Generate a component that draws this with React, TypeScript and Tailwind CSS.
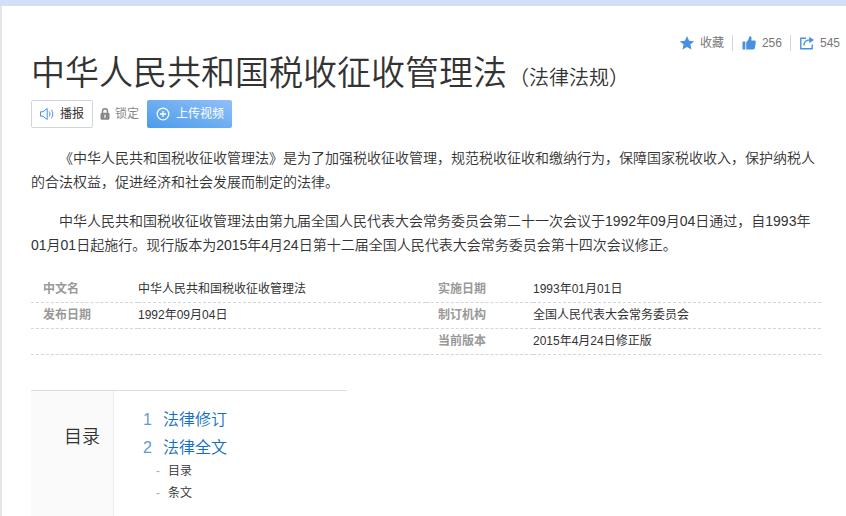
import type { ReactNode } from 'react';

const infoRows = [
  [
    { name: '中文名', value: '中华人民共和国税收征收管理法' },
    { name: '实施日期', value: '1993年01月01日' },
  ],
  [
    { name: '发布日期', value: '1992年09月04日' },
    { name: '制订机构', value: '全国人民代表大会常务委员会' },
  ],
  [null, { name: '当前版本', value: '2015年4月24日修正版' }],
];

const catalog = [
  { id: '1', label: '法律修订', children: [] },
  { id: '2', label: '法律全文', children: ['目录', '条文'] },
];

function StarIcon() {
  return (
    <svg className="w-4 h-4 text-[#4a90e2]" viewBox="0 0 16 16" fill="currentColor" aria-hidden="true">
      <path d="M8 1l2.1 4.700 5.100.5-3.800 3.400 1.100 5L8 12l-4.500 2.600 1.100-5L.8 6.200l5.100-.5z" />
    </svg>
  );
}

function ThumbIcon() {
  return (
    <svg className="w-4 h-4 text-[#4a90e2]" viewBox="0 0 16 16" fill="currentColor" aria-hidden="true">
      <path d="M1.500 6.500h2.800v8H1.500z" />
      <path d="M5.200 7c1.600-.9 2.600-2.500 2.800-4.700C8.100 1.300 8.800 1 9.500 1.300c1.200.5 1.300 2.300.8 4.200h3.200c.9 0 1.400.6 1.300 1.400l-.9 6.200c-.1.9-.7 1.400-1.500 1.400H5.200z" />
    </svg>
  );
}

function ShareIcon() {
  return (
    <svg className="w-4 h-4 text-[#4a90e2]" viewBox="0 0 16 16" fill="none" stroke="currentColor" strokeWidth="1.400" aria-hidden="true">
      <path d="M7 3.300H1.800v10.400h11.400V9.500" />
      <path d="M4.800 10.500c.2-3.500 2.200-5.400 6-5.600" />
      <path d="M10.200 1.800L15 4.900l-4.800 3.300z" fill="currentColor" stroke="none" />
    </svg>
  );
}

function SpeakerIcon() {
  return (
    <svg className="w-4 h-4 text-[#4a90e2]" viewBox="0 0 16 16" fill="none" stroke="currentColor" aria-hidden="true">
      <path d="M1.500 5.800H4L8.200 2.500v11L4 10.200H1.500z" strokeLinejoin="round" />
      <path d="M10.300 5.800c1 1.300 1 3.100 0 4.400M12.500 4c1.800 2.300 1.800 5.700 0 8" strokeLinecap="round" />
    </svg>
  );
}

function LockIcon() {
  return (
    <svg className="w-3 h-3 text-[#888]" viewBox="0 0 12 12" aria-hidden="true">
      <path d="M3.500 5.500V3.300a2.500 2.500 0 015 0v2.200" fill="none" stroke="currentColor" strokeWidth="1.500" />
      <rect x="1.500" y="4.800" width="9" height="7" rx="1.500" fill="currentColor" />
      <path d="M6 6.800v3" stroke="#fff" strokeWidth="1.300" />
    </svg>
  );
}

function PlusIcon() {
  return (
    <svg className="w-4 h-4" viewBox="0 0 16 16" fill="none" stroke="currentColor" strokeWidth="1.300" aria-hidden="true">
      <circle cx="8" cy="8" r="5.800" />
      <path d="M8 5v6M5 8h6" />
    </svg>
  );
}

function TopAction({ icon, label }: { icon: ReactNode; label: string }) {
  return (
    <button className="flex items-center gap-[5px] h-4 px-2 border-l border-gray-300 first:border-l-0 last:pr-1.5">
      {icon}
      <span>{label}</span>
    </button>
  );
}

export default function App() {
  return (
    <div className="min-h-screen flex flex-col bg-white border-t-6 border-[#d3dff7] text-[#333] font-['Liberation_Sans','Noto_Sans_CJK_SC',sans-serif]">
      <div className="flex-1 flex flex-col border-l-2 border-[#e6e6ea] pl-[29px]">
        {/* Top actions */}
        <div className="flex justify-end pt-[29px] text-xs text-[#777]">
          <TopAction icon={<StarIcon />} label="收藏" />
          <TopAction icon={<ThumbIcon />} label="256" />
          <TopAction icon={<ShareIcon />} label="545" />
        </div>

        <main className="flex-1 flex flex-col pr-[25px]">
          {/* Title */}
          <header className="flex items-baseline gap-0.5 whitespace-nowrap">
            <h1 className="text-[34px] leading-[44px] font-[350]">中华人民共和国税收征收管理法</h1>
            <h2 className="text-xl leading-7 font-[350]">（法律法规）</h2>
          </header>

          <div className="flex items-center mt-[5px] text-xs">
            <button className="flex items-center gap-[5px] h-7 px-[7px] pr-2 border border-gray-300 rounded-xs">
              <SpeakerIcon />
              <span>播报</span>
            </button>
            <a href="#lock" className="flex items-center gap-1 ml-1.5 text-[#888]">
              <LockIcon />
              锁定
            </a>
            <button className="flex items-center gap-[5px] h-7 px-2 ml-2 rounded-xs text-white bg-linear-to-tr from-[#4a9bea] to-[#8fc0f8]">
              <PlusIcon />
              <span>上传视频</span>
            </button>
          </div>

          {/* Summary */}
          <div className="mt-[18px] space-y-[15px] text-sm leading-6 font-[350]">
            <p className="indent-7">
              《中华人民共和国税收征收管理法》是为了加强税收征收管理，规范税收征收和缴纳行为，保障国家税收收入，保护纳税人的合法权益，促进经济和社会发展而制定的法律。
            </p>
            <p className="indent-7">
              中华人民共和国税收征收管理法由第九届全国人民代表大会常务委员会第二十一次会议于1992年09月04日通过，自1993年01月01日起施行。现行版本为2015年4月24日第十二届全国人民代表大会常务委员会第十四次会议修正。
            </p>
          </div>

          {/* Basic info */}
          <table className="w-full mt-[19px] table-fixed text-xs text-left">
            <colgroup>
              <col className="w-[107px]" />
              <col />
              <col className="w-[107px]" />
              <col />
            </colgroup>
            <tbody>
              {infoRows.map((row, i) => (
                <tr key={i} className="h-[26px] border-b border-dashed border-gray-300">
                  {row.map((item, j) =>
                    item ? (
                      [
                        <th key={`n${j}`} scope="row" className="pl-3 font-bold text-[#999]">
                          {item.name}
                        </th>,
                        <td key={`v${j}`}>{item.value}</td>,
                      ]
                    ) : (
                      <td key={j} colSpan={2} />
                    ),
                  )}
                </tr>
              ))}
            </tbody>
          </table>

          {/* Catalog */}
          <nav className="flex-1 flex w-2/5 mt-[35px] border-t border-[#ddd] font-[350]">
            <h2 className="w-[83px] shrink-0 pt-8 pr-[13px] text-lg text-right bg-[#fafafa] border-r border-[#eee]">
              目录
            </h2>
            <ol className="pt-[17px] pl-[29px] space-y-1">
              {catalog.map((item) => (
                <li key={item.id}>
                  <a href={`#${item.id}`} className="flex gap-[11px] text-base leading-6 text-[#136ec2]">
                    <span className="text-[#5f9ad1]">{item.id}</span>
                    {item.label}
                  </a>
                  {item.children.length > 0 && (
                    <ul className="pl-[13px] text-xs leading-[22px]">
                      {item.children.map((child) => (
                        <li key={child} className="flex gap-2">
                          <span className="text-[#aaa]">-</span>
                          <a href={`#${item.id}-${child}`}>{child}</a>
                        </li>
                      ))}
                    </ul>
                  )}
                </li>
              ))}
            </ol>
          </nav>
        </main>
      </div>
    </div>
  );
}
